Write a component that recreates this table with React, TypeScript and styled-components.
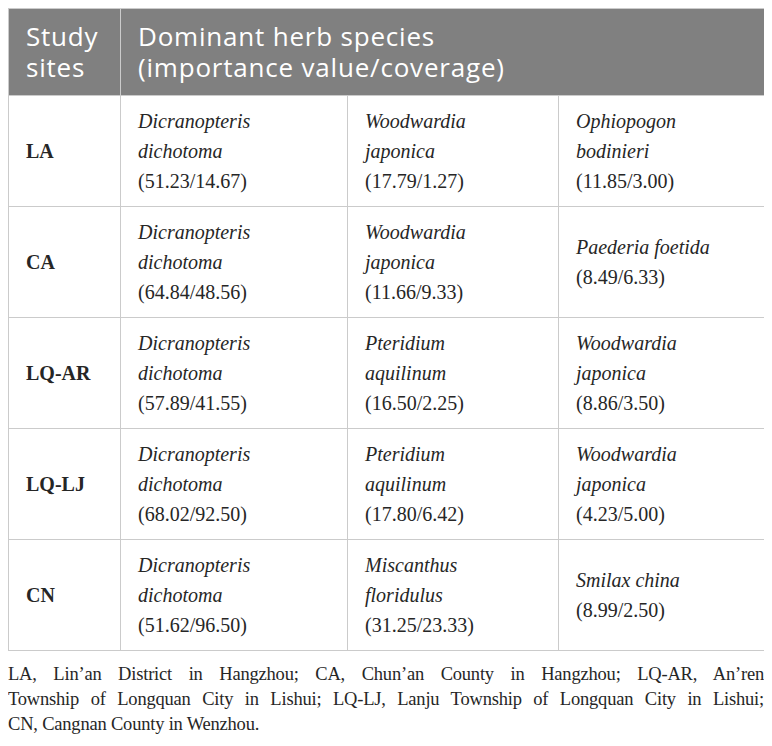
import React from "react";
import styled, { createGlobalStyle } from "styled-components";

const Global = createGlobalStyle`
  html, body { background: #ffffff; }
  body { margin: 8px; font-family: "Liberation Serif", "Times New Roman", serif; color: #262626; }
`;

const Table = styled.table`
  width: 100%;
  border-collapse: collapse;
  table-layout: fixed;
  border: 1px solid #cbcbcb;
`;

const Col = styled.col<{ $w: number }>`
  width: ${(p) => p.$w}px;
`;

const HeaderCell = styled.th`
  background: #808080;
  color: #ffffff;
  font-family: "Open Sans", "Noto Sans", sans-serif;
  font-weight: 400;
  font-size: 26px;
  letter-spacing: 0.8px;
  line-height: 31px;
  text-align: left;
  vertical-align: top;
  padding: 12px 17px 12px 17px;
  border: 1px solid #cbcbcb;
  border-bottom: none;
`;

const SiteCell = styled.td`
  font-weight: 700;
  font-size: 20px;
  line-height: 30px;
  padding: 10px 17px;
  vertical-align: middle;
  border: 1px solid #cbcbcb;
`;

const SpeciesCell = styled.td`
  font-size: 20px;
  line-height: 30px;
  padding: 10px 17px;
  vertical-align: middle;
  border: 1px solid #cbcbcb;
`;

const Name = styled.i`
  font-style: italic;
`;

const Footnote = styled.div`
  margin-top: 11px;
  font-size: 18.5px;
  line-height: 25px;
  letter-spacing: -0.2px;
`;

const NoteLine = styled.div<{ $last?: boolean }>`
  text-align: ${(p) => (p.$last ? "left" : "justify")};
  text-align-last: ${(p) => (p.$last ? "left" : "justify")};
  white-space: nowrap;
`;

type Sp = { name: React.ReactNode; val: string };

const rows: { site: string; sp: Sp[] }[] = [
  {
    site: "LA",
    sp: [
      { name: <>Dicranopteris<br />dichotoma</>, val: "(51.23/14.67)" },
      { name: <>Woodwardia<br />japonica</>, val: "(17.79/1.27)" },
      { name: <>Ophiopogon<br />bodinieri</>, val: "(11.85/3.00)" },
    ],
  },
  {
    site: "CA",
    sp: [
      { name: <>Dicranopteris<br />dichotoma</>, val: "(64.84/48.56)" },
      { name: <>Woodwardia<br />japonica</>, val: "(11.66/9.33)" },
      { name: <>Paederia foetida</>, val: "(8.49/6.33)" },
    ],
  },
  {
    site: "LQ-AR",
    sp: [
      { name: <>Dicranopteris<br />dichotoma</>, val: "(57.89/41.55)" },
      { name: <>Pteridium<br />aquilinum</>, val: "(16.50/2.25)" },
      { name: <>Woodwardia<br />japonica</>, val: "(8.86/3.50)" },
    ],
  },
  {
    site: "LQ-LJ",
    sp: [
      { name: <>Dicranopteris<br />dichotoma</>, val: "(68.02/92.50)" },
      { name: <>Pteridium<br />aquilinum</>, val: "(17.80/6.42)" },
      { name: <>Woodwardia<br />japonica</>, val: "(4.23/5.00)" },
    ],
  },
  {
    site: "CN",
    sp: [
      { name: <>Dicranopteris<br />dichotoma</>, val: "(51.62/96.50)" },
      { name: <>Miscanthus<br />floridulus</>, val: "(31.25/23.33)" },
      { name: <>Smilax china</>, val: "(8.99/2.50)" },
    ],
  },
];

const noteLines = [
  "LA, Lin’an District in Hangzhou; CA, Chun’an County in Hangzhou; LQ-AR, An’ren",
  "Township of Longquan City in Lishui; LQ-LJ, Lanju Township of Longquan City in Lishui;",
  "CN, Cangnan County in Wenzhou.",
];

export default function App() {
  return (
    <>
      <Global />
      <Table>
        <colgroup>
          <Col $w={112} />
          <Col $w={227} />
          <Col $w={211} />
          <Col $w={206} />
        </colgroup>
        <thead>
          <tr>
            <HeaderCell>Study<br />sites</HeaderCell>
            <HeaderCell colSpan={3}>Dominant herb species<br />(importance value/coverage)</HeaderCell>
          </tr>
        </thead>
        <tbody>
          {rows.map((r) => (
            <tr key={r.site}>
              <SiteCell>{r.site}</SiteCell>
              {r.sp.map((s, i) => (
                <SpeciesCell key={i}>
                  <Name>{s.name}</Name>
                  <br />
                  {s.val}
                </SpeciesCell>
              ))}
            </tr>
          ))}
        </tbody>
      </Table>
      <Footnote>
        {noteLines.map((l, i) => (
          <NoteLine key={i} $last={i === noteLines.length - 1}>{l}</NoteLine>
        ))}
      </Footnote>
    </>
  );
}
